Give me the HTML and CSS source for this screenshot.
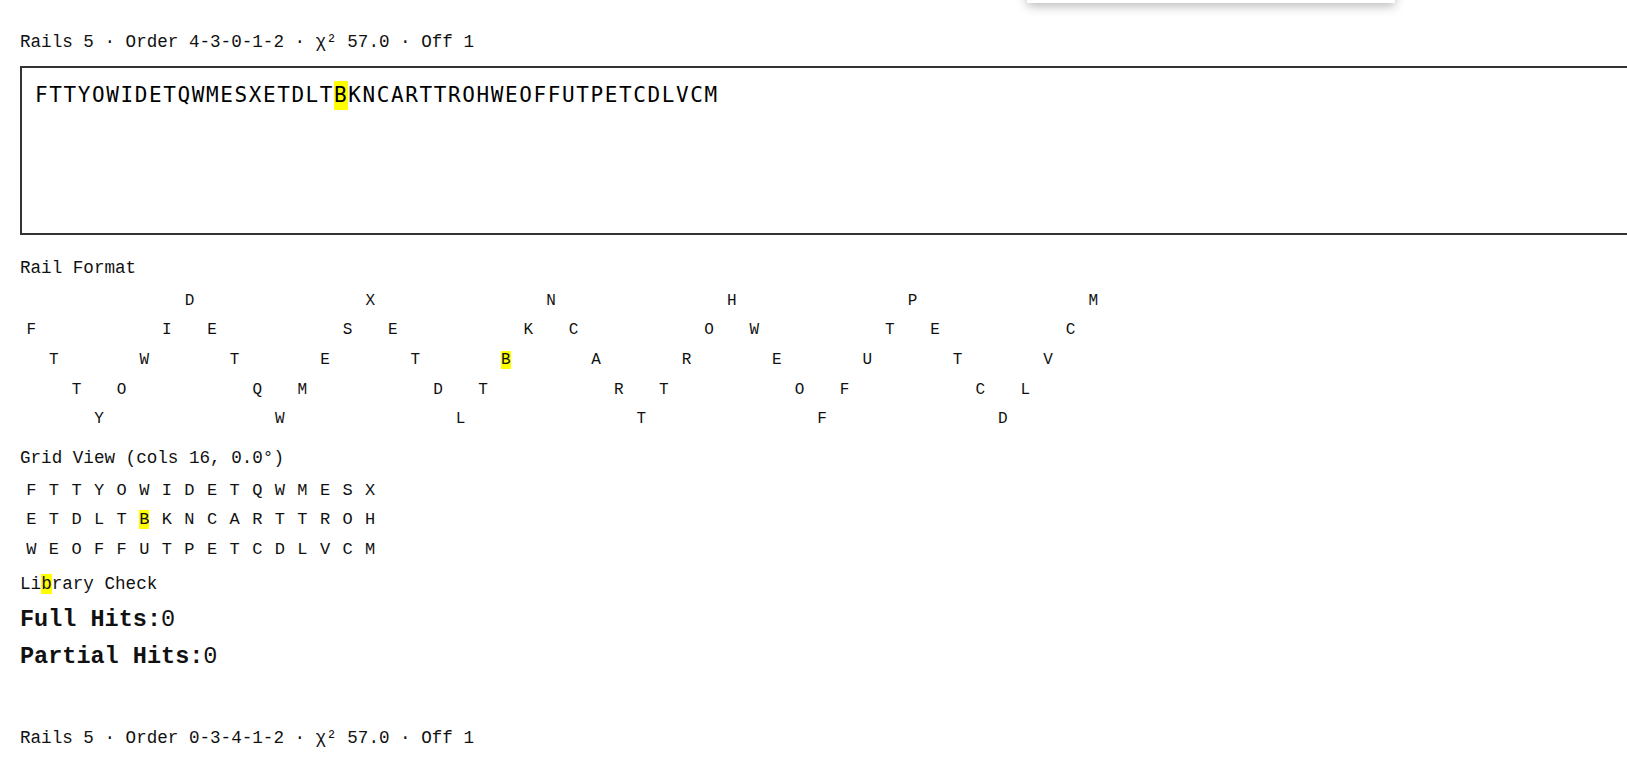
FILE: index.html
```html
<!DOCTYPE html>
<html lang="en">
<head>
    <meta charset="UTF-8">
    <title>Rail Fence Results</title>
    <link rel="stylesheet" href="styles.css">
</head>
<body>
    <div class="popup"></div>

    <main class="page">
        <section class="result" data-text="FTTYOWIDETQWMESXETDLTBKNCARTTROHWEOFFUTPETCDLVCM" data-offset="1" data-mark="21">
            <div class="meta">Rails 5 · Order 4-3-0-1-2 · χ² 57.0 · Off 1</div>
            <div class="plain">FTTYOWIDETQWMESXETDLT<mark>B</mark>KNCARTTROHWEOFFUTPETCDLVCM</div>
            <div class="label label-rail">Rail Format</div>
            <div class="rails"></div>
            <div class="label label-grid">Grid View (cols 16, 0.0°)</div>
            <div class="grid"></div>
            <div class="label label-lib">Li<mark>b</mark>rary Check</div>
            <div class="hits"><strong>Full Hits:</strong>0</div>
            <div class="hits"><strong>Partial Hits:</strong>0</div>
        </section>

        <section class="result" data-text="FTTYOWIDETQWMESXETDLTBKNCARTTROHWEOFFUTPETCDLVCM" data-offset="1" data-mark="21">
            <div class="meta">Rails 5 · Order 0-3-4-1-2 · χ² 57.0 · Off 1</div>
            <div class="plain">FTTYOWIDETQWMESXETDLT<mark>B</mark>KNCARTTROHWEOFFUTPETCDLVCM</div>
        </section>
    </main>

    <script>
        // build rail rows and grid view from the text
        document.querySelectorAll('.result').forEach(function(sec) {
            const text = sec.dataset.text;
            const off = parseInt(sec.dataset.offset, 10);
            const mark = parseInt(sec.dataset.mark, 10);
            const rails = 5;
            const period = (rails - 1) * 2;

            const railBox = sec.querySelector('.rails');
            if (railBox) {
                for (let r = 0; r < rails; r++) {
                    const row = document.createElement('div');
                    row.className = 'rail-row';
                    for (let i = 0; i < text.length; i++) {
                        const p = (i + off) % period;
                        const rr = p < rails ? p : period - p;
                        const cell = document.createElement('span');
                        cell.className = 'cell';
                        if (rr === r) {
                            if (i === mark) {
                                cell.innerHTML = '<mark>' + text[i] + '</mark>';
                            } else {
                                cell.textContent = text[i];
                            }
                        }
                        row.appendChild(cell);
                    }
                    railBox.appendChild(row);
                }
            }

            const gridBox = sec.querySelector('.grid');
            if (gridBox) {
                const cols = 16;
                for (let start = 0; start < text.length; start += cols) {
                    const row = document.createElement('div');
                    row.className = 'grid-row';
                    for (let i = start; i < Math.min(start + cols, text.length); i++) {
                        const cell = document.createElement('span');
                        cell.className = 'cell';
                        if (i === mark) {
                            cell.innerHTML = '<mark>' + text[i] + '</mark>';
                        } else {
                            cell.textContent = text[i];
                        }
                        row.appendChild(cell);
                    }
                    gridBox.appendChild(row);
                }
            }
        });
    </script>
</body>
</html>
```

FILE: styles.css
```css
html {
    overflow: hidden;
}
body {
    margin: 0;
    background: #fff;
    color: #111;
    font-family: "Liberation Mono", "DejaVu Sans Mono", monospace;
}
mark {
    background: #ffff00;
    color: inherit;
}
.popup {
    position: absolute;
    left: 1027px;
    top: -40px;
    width: 368px;
    height: 43px;
    background: #fff;
    box-shadow: 0 3px 10px rgba(0,0,0,0.28);
}
.page {
    padding: 30px 20px 0;
}
.result {
    margin-bottom: 54px;
}
.meta {
    font-size: 17.6px;
    line-height: 24px;
}
.plain {
    margin-top: 12px;
    width: 1700px;
    height: 169px;
    box-sizing: border-box;
    border: 2px solid #333;
    padding: 15px 13px;
    font-family: "DejaVu Sans Mono", monospace;
    font-size: 21px;
    letter-spacing: 1.6px;
    line-height: 24px;
    color: #000;
}
.plain mark {
    padding: 2px 0 3px;
}
.label {
    font-size: 17.6px;
    line-height: 24px;
}
.label-rail {
    margin-top: 21px;
}
.label-grid {
    margin-top: 12.5px;
}
.label-lib {
    margin-top: 7px;
}
.rails {
    margin-top: 6px;
}
.rail-row,
.grid-row {
    display: flex;
    height: 29.6px;
    align-items: center;
}
.cell {
    width: 22.6px;
    flex: none;
    text-align: center;
    font-size: 16px;
    line-height: 20px;
}
.grid {
    margin-top: 5.5px;
}
.grid .cell {
    font-size: 17px;
}
.hits {
    font-size: 23.5px;
    line-height: 30px;
    margin-top: 9px;
}
.hits + .hits {
    margin-top: 7.7px;
}
```
